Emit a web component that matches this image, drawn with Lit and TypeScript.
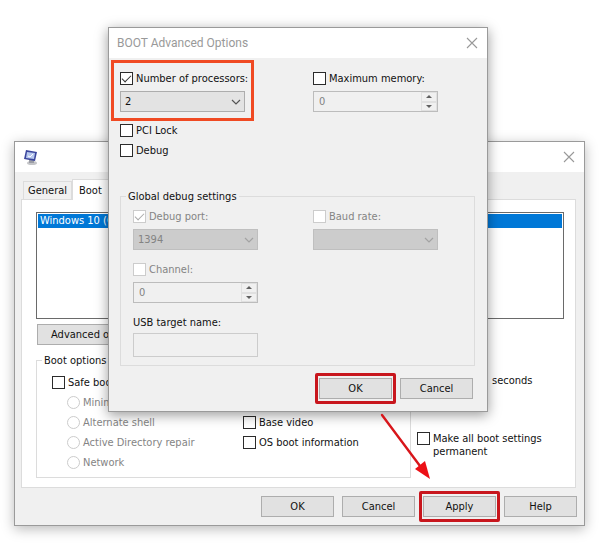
import { LitElement, html, css, svg, nothing } from "lit";
import { customElement, property } from "lit/decorators.js";

const controls = css`
  *, *::before, *::after { box-sizing: border-box; }
  button, input, select, label, legend, fieldset { font: inherit; color: inherit; margin: 0; }
  .check { display: flex; align-items: center; gap: 3px; height: 15px; white-space: nowrap; }
  .check.wrap { align-items: flex-start; height: auto; line-height: 13px; white-space: normal; }
  .check.off { color: #848484; }
  .box {
    appearance: none; flex: none; width: 13px; height: 13px;
    border: 1px solid #2b2b2b; background: #fff;
    display: grid; place-items: center;
  }
  .box:disabled { border-color: #ccc; }
  .box:checked::after {
    content: ""; width: 9px; height: 5px; margin-top: -3px;
    border: solid #333; border-width: 0 0 1px 1px; transform: rotate(-45deg);
  }
  .box:disabled:checked::after { border-color: #aaa; }
  .box[type="radio"] { border-radius: 50%; }
  .push {
    display: block; width: 73px; height: 21px; padding: 0; border: 1px solid #adadad;
    border-radius: 0; background: #e1e1e1; text-align: center; white-space: nowrap;
  }
  .group { min-width: 0; border: 1px solid #dcdcdc; }
  .group legend { height: 15px; line-height: 15px; padding: 0 2px; }
  .close { width: 12px; height: 12px; padding: 0; border: 0; background: none; display: block; }
  .close svg { display: block; }
  .marked { position: relative; }
  .marked::after {
    content: ""; position: absolute; inset: -6px -5px; border: 3px solid #c8161d;
    border-radius: 2px; pointer-events: none;
  }
`;

const cross = html`<svg width="12" height="12" viewBox="0 0 12 12" aria-hidden="true">
  <path d="M1 1L11 11M11 1L1 11" stroke="#999" stroke-width="1.1" fill="none" />
</svg>`;

function check(text: string, o: { on?: boolean; off?: boolean; radio?: boolean; cls?: string } = {}) {
  return html`<label class="check ${o.off ? "off" : ""} ${o.cls ?? ""}">
    <input class="box" type=${o.radio ? "radio" : "checkbox"} name=${o.radio ? "safe" : nothing}
      ?checked=${o.on} ?disabled=${o.off} />${text}</label>`;
}

@customElement("combo-box")
class ComboBox extends LitElement {
  @property() value = "";
  @property() name = "";
  @property({ type: Boolean }) disabled = false;

  static styles = css`
    :host { display: grid; height: 21px; align-items: center; }
    select {
      grid-area: 1 / 1; box-sizing: border-box; width: 100%; height: 21px; appearance: none;
      border: 1px solid #adadad; border-radius: 0; background: #e3e3e3; font: inherit;
      color: #111; padding: 0 20px 0 4px; opacity: 1;
    }
    select:disabled { background: #ccc; border-color: #bfbfbf; color: #838383; }
    svg { grid-area: 1 / 1; justify-self: end; margin-right: 4px; pointer-events: none; }
    path { fill: none; stroke: #555; stroke-width: 1.2; }
    select:disabled + svg path { stroke: #a3a3a3; }
  `;

  render() {
    return html`<select aria-label=${this.name} ?disabled=${this.disabled}>
        <option>${this.value}</option></select>
      <svg width="10" height="6" viewBox="0 0 10 6" aria-hidden="true"><path d="M1 1L5 5L9 1" /></svg>`;
  }
}

@customElement("spin-box")
class SpinBox extends LitElement {
  @property() name = "";

  static styles = css`
    :host { display: flex; box-sizing: border-box; height: 21px; border: 1px solid #bcbcbc; }
    input {
      flex: 1; min-width: 0; padding: 0 5px; border: 0; background: none; font: inherit;
      color: #838383; appearance: textfield;
    }
    input::-webkit-inner-spin-button { display: none; }
    .arrows { display: grid; grid-template-rows: 1fr 1fr; width: 16px; }
    button { padding: 0; border: 1px solid #e0e0e0; background: #f0f0f0; display: grid; place-items: center; }
    svg { display: block; fill: #606060; }
  `;

  render() {
    return html`<input type="number" value="0" aria-label=${this.name} disabled />
      <span class="arrows">
        <button aria-label="Increase" disabled><svg width="6" height="3"><path d="M0 3L3 0L6 3Z" /></svg></button>
        <button aria-label="Decrease" disabled><svg width="6" height="3"><path d="M0 0L3 3L6 0Z" /></svg></button>
      </span>`;
  }
}

@customElement("config-window")
class ConfigWindow extends LitElement {
  static styles = [controls, css`
    :host { display: block; border: 1px solid #9a9a9a; background: #f0f0f0; box-shadow: 0 3px 12px rgba(0, 0, 0, 0.28); }
    .bar { display: flex; align-items: center; justify-content: space-between; height: 30px; padding: 0 9px 0 8px; background: #fff; }
    .body { padding: 7px 8px 8px 6px; }
    .tabs { display: flex; align-items: flex-end; height: 21px; padding-left: 2px; margin-bottom: -1px; }
    .tab { height: 18px; margin-bottom: 1px; padding: 0 4px; border: 1px solid #dcdcdc; border-bottom: 0; background: #f0f0f0; }
    .tab.active { position: relative; height: 21px; margin: 0; padding: 0 6px; background: #fff; }
    .panel { padding: 12px 11px 9px 14px; border: 1px solid #dcdcdc; background: #fff; }
    .list { height: 107px; padding: 1px; border: 1px solid #6a6a6a; }
    .entry { height: 14px; padding-left: 2px; line-height: 14px; background: #0078d7; color: #fff; }
    .advanced { width: 126px; margin: 5px 0 8px 1px; }
    .columns { display: flex; }
    .options {
      flex: 1; display: grid; grid-template-columns: 191px 1fr; grid-auto-rows: 15px; row-gap: 5px;
      padding: 7px 0 7px 15px;
    }
    .options legend { margin-left: -10px; }
    .options .check { grid-column: 1; }
    .sub { padding-left: 15px; }
    .options .base { grid-area: 3 / 2; }
    .options .info { grid-area: 4 / 2; }
    .side { width: 153px; padding: 20px 0 0 6px; }
    .unit { height: 15px; line-height: 15px; padding-left: 75px; margin-bottom: 44px; }
    .actions { display: flex; justify-content: flex-end; gap: 8px; margin: 8px -1px 0 0; }
  `];

  render() {
    return html`
      <header class="bar">
        <svg width="16" height="17" viewBox="0 0 16 17" aria-hidden="true">
          <ellipse cx="9" cy="14" rx="5" ry="2" fill="#c4c5c8" />
          <path d="M6 11H11V14H6Z" fill="#9b9da6" />
          <path d="M3 1L14 3L12 12L1 10Z" fill="#3a459c" />
          <path d="M4 3L12 4L11 10L3 9Z" fill="#b7c8ee" />
          <path d="M5 7L7 8L10 5" fill="none" stroke="#fff" />
        </svg>
        <button class="close" aria-label="Close">${cross}</button>
      </header>
      <div class="body">
        <nav class="tabs" role="tablist">
          <button class="tab" role="tab">General</button>
          <button class="tab active" role="tab" aria-selected="true">Boot</button>
        </nav>
        <section class="panel">
          <div class="list" role="listbox"><div class="entry" role="option" aria-selected="true">Windows 10 (C:)</div></div>
          <button class="push advanced">Advanced options...</button>
          <div class="columns">
            <fieldset class="group options">
              <legend>Boot options</legend>
              ${check("Safe boot")}
              ${["Minimal", "Alternate shell", "Active Directory repair", "Network"].map(
                (t) => check(t, { off: true, radio: true, cls: "sub" }))}
              ${check("Base video", { cls: "base" })}
              ${check("OS boot information", { cls: "info" })}
            </fieldset>
            <div class="side">
              <div class="unit">seconds</div>
              ${check("Make all boot settings permanent", { cls: "wrap" })}
            </div>
          </div>
        </section>
        <footer class="actions">
          <button class="push">OK</button>
          <button class="push">Cancel</button>
          <button class="push marked">Apply</button>
          <button class="push">Help</button>
        </footer>
      </div>`;
  }
}

@customElement("boot-dialog")
class BootDialog extends LitElement {
  static styles = [controls, css`
    :host { display: block; border: 1px solid #9a9a9a; background: #f0f0f0; box-shadow: 0 3px 12px rgba(0, 0, 0, 0.4); }
    .bar { display: flex; align-items: center; justify-content: space-between; height: 30px; padding: 0 9px 0 8px; background: #fff; }
    h1 { margin: 0; font: 12px/16px Roboto, sans-serif; color: #999; }
    .body { padding: 13px 12px 12px 11px; }
    .top { display: grid; grid-template-columns: 193px 1fr; row-gap: 11px; }
    .field { display: grid; grid-template-columns: minmax(0, 1fr); width: 125px; row-gap: 5px; align-content: start; }
    .framed { position: relative; }
    .framed::after { content: ""; position: absolute; inset: -11px -9px -9px; border: 3px solid #f04a23; pointer-events: none; }
    .stack { display: grid; row-gap: 5px; }
    .debug { display: grid; grid-template-columns: 180px 1fr; row-gap: 12px; margin-top: 31px; padding: 5px 0 8px 12px; }
    .debug legend { margin-left: -7px; }
    .debug .field { grid-column: 1; }
    .debug .field.right { grid-area: 1 / 2; }
    .target { row-gap: 3px; }
    .target label { height: 15px; line-height: 15px; }
    .target input { width: 100%; height: 24px; border: 1px solid #ccc; background: none; }
    .actions { display: flex; justify-content: flex-end; gap: 8px; margin: 12px 2px 0 0; }
  `];

  render() {
    return html`
      <header class="bar"><h1>BOOT Advanced Options</h1>
        <button class="close" aria-label="Close">${cross}</button></header>
      <div class="body">
        <div class="top">
          <div class="field framed">
            ${check("Number of processors:", { on: true })}
            <combo-box name="Number of processors" value="2"></combo-box>
          </div>
          <div class="field">
            ${check("Maximum memory:")}
            <spin-box name="Maximum memory"></spin-box>
          </div>
          <div class="stack">${check("PCI Lock")}${check("Debug")}</div>
        </div>
        <fieldset class="group debug">
          <legend>Global debug settings</legend>
          <div class="field">
            ${check("Debug port:", { on: true, off: true })}
            <combo-box name="Debug port" value="1394" disabled></combo-box>
          </div>
          <div class="field right">
            ${check("Baud rate:", { off: true })}
            <combo-box name="Baud rate" disabled></combo-box>
          </div>
          <div class="field">
            ${check("Channel:", { off: true })}
            <spin-box name="Channel"></spin-box>
          </div>
          <div class="field target">
            <label for="usb">USB target name:</label>
            <input id="usb" type="text" disabled />
          </div>
        </fieldset>
        <footer class="actions">
          <button class="push marked">OK</button>
          <button class="push">Cancel</button>
        </footer>
      </div>`;
  }
}

@customElement("app-root")
class AppRoot extends LitElement {
  static styles = css`
    :host {
      display: block; position: relative; min-width: 600px; min-height: 100vh; overflow: hidden;
      background: #fff; color: #111; font: 11px/15px "DejaVu Sans Condensed", "DejaVu Sans", sans-serif;
    }
    config-window { position: absolute; inset: 141px 18px auto 14px; }
    boot-dialog { position: absolute; inset: 27px 115px auto 108px; }
    .arrow { position: absolute; top: 412px; right: 168px; pointer-events: none; }
  `;

  render() {
    return html`
      <config-window></config-window>
      <boot-dialog></boot-dialog>
      <svg class="arrow" width="56" height="70" viewBox="0 0 56 70" aria-hidden="true">
        ${svg`<path d="M3 3L44 58" stroke="#d8161b" stroke-width="2.4" stroke-linecap="round" />
        <path d="M51 67L36 57L46 49Z" fill="#ec1016" />`}
      </svg>`;
  }
}
